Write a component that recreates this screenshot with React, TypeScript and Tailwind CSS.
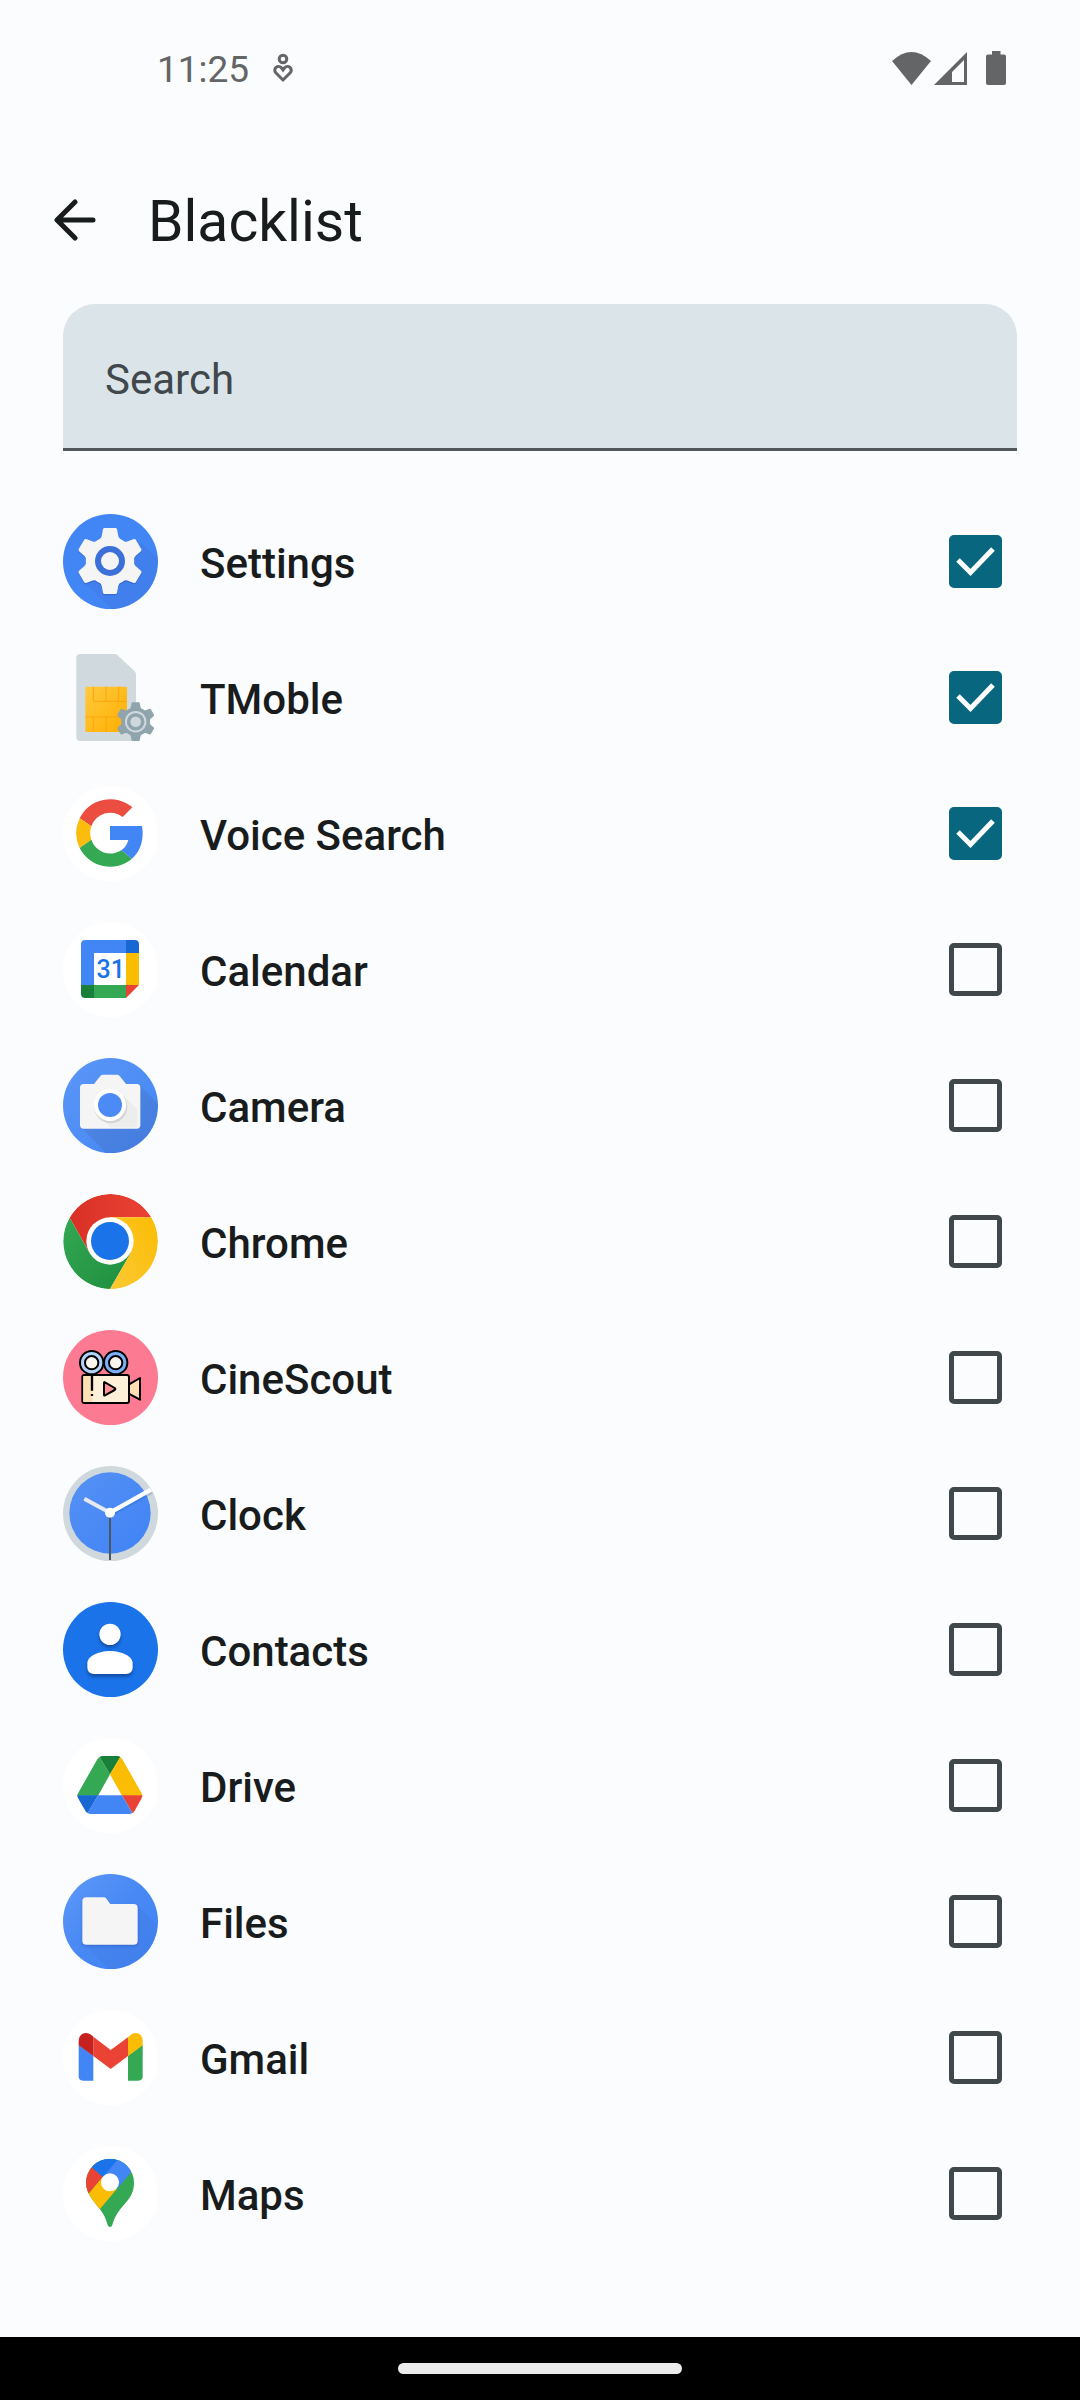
import { useState, type ReactNode } from 'react';

const TOOTH = 'M-16,-99 H16 Q20,-99 21,-95 L25,-74 Q27,-66 34,-64 L40,-60 L0,0 L-40,-60 L-34,-64 Q-27,-66 -25,-74 L-21,-95 Q-20,-99 -16,-99 Z';

function Gear({ fill }: { fill: string }) {
  return (
    <g fill={fill}>
      <circle r="72" />
      {[0, 60, 120, 180, 240, 300].map((a) => (
        <path key={a} d={TOOTH} transform={`rotate(${a})`} />
      ))}
    </g>
  );
}

function AppIcon({ viewBox, children }: { viewBox: string; children: ReactNode }) {
  return (
    <svg viewBox={viewBox} className="size-[95px] shrink-0 overflow-hidden rounded-full" aria-hidden="true">
      {children}
    </svg>
  );
}

const SettingsIcon = () => (
  <AppIcon viewBox="69 72 285 285">
    <rect x="69" y="72" width="285" height="285" fill="#4285f4" />
    <path d="M303,160 L380,225 V380 H240 L133,277 L210,213 Z" fill="#3f51b5" opacity="0.1" />
    <g transform="translate(210 217)" opacity="0.22">
      <Gear fill="#1a237e" />
    </g>
    <g transform="translate(210 213)">
      <Gear fill="#f5f5f5" />
      <circle r="45" fill="#3c6fd8" />
      <circle r="27" fill="#f5f5f5" />
    </g>
  </AppIcon>
);

const SimIcon = () => (
  <svg viewBox="69 480 285 285" className="size-[95px] shrink-0" aria-hidden="true">
    <defs>
      <linearGradient id="chip" x1="0" y1="0" x2="1" y2="1">
        <stop offset="0" stopColor="#ffca3e" />
        <stop offset="1" stopColor="#ffae00" />
      </linearGradient>
    </defs>
    <path d="M121,492 H224 Q229,492 232,495 L284,544 Q288,548 288,553 V753 H121 Q109,753 109,741 V504 Q109,492 121,492 Z" fill="#d0d9dd" />
    <rect x="136" y="590" width="125" height="136" rx="4" fill="url(#chip)" />
    <path d="M160,590 V634 H261 M198,590 V634 M236,590 V634 M136,681 H261 M160,681 V726 M198,681 V726" fill="none" stroke="#fba60c" strokeWidth="3" />
    <g transform="translate(287 695) scale(0.586)">
      <Gear fill="#90a4ae" />
      <circle r="50" fill="none" stroke="#cfd8dc" strokeWidth="10" />
      <circle r="27" fill="#cfd8dc" />
    </g>
  </svg>
);

const GoogleIcon = () => (
  <AppIcon viewBox="39 48 285 285">
    <rect x="39" y="48" width="285" height="285" fill="#fff" />
    <path d="M89,145 A102 102 0 0 1 247,112 L218,141 A60 60 0 0 0 124,169 Z" fill="#eb4d40" />
    <path d="M89,145 A102 102 0 0 0 89,234 L124,209 A60 60 0 0 1 124,169 Z" fill="#fbbc0e" />
    <path d="M89,234 A102 102 0 0 0 246,266 L214,241 A60 60 0 0 1 124,209 Z" fill="#34a853" />
    <path d="M180,168 H276 Q278,178 278,190 C278,222 266,249 246,266 L214,241 Q230,230 235,210 H180 Z" fill="#4285f4" />
  </AppIcon>
);

const CalendarIcon = () => (
  <AppIcon viewBox="39 456 285 285">
    <rect x="39" y="456" width="285" height="285" fill="#fff" />
    <path d="M106,510 H228 V549 H132 V645 H93 V523 Q93,510 106,510 Z" fill="#4285f4" />
    <path d="M228,510 H254 Q267,510 267,523 V549 H228 Z" fill="#1967d2" />
    <path d="M228,549 H267 V645 H228 Z" fill="#fbbc04" />
    <path d="M132,645 H228 V684 H132 Z" fill="#34a853" />
    <path d="M93,645 H132 V684 H106 Q93,684 93,671 Z" fill="#188038" />
    <path d="M228,645 H267 L228,684 Z" fill="#ea4335" />
    <text x="182" y="625" textAnchor="middle" fontSize="75" className="font-['Roboto',sans-serif] font-medium" fill="#1a73e8">
      31
    </text>
  </AppIcon>
);

const CameraIcon = () => (
  <AppIcon viewBox="39 54 285 285">
    <defs>
      <linearGradient id="cam" x1="0" y1="0" x2="1" y2="1">
        <stop offset="0" stopColor="#5c97f8" />
        <stop offset="1" stopColor="#4285f4" />
      </linearGradient>
    </defs>
    <rect x="39" y="54" width="285" height="285" fill="url(#cam)" />
    <path d="M268,136 L340,206 V345 H174 L94,263 Z" fill="#404a60" opacity="0.14" />
    <path d="M101,132 H132 L151,108 Q154,104 159,104 H201 Q206,104 209,108 L228,132 H260 Q271,132 271,143 V255 Q271,266 260,266 H101 Q90,266 90,255 V143 Q90,132 101,132 Z" fill="#f5f5f5" />
    <path d="M214,161 L262,208 V262 H182 L146,229 Z" fill="#000" opacity="0.03" />
    <circle cx="182" cy="200" r="50" fill="#000" opacity="0.1" />
    <circle cx="180" cy="195" r="48" fill="#fff" />
    <circle cx="180" cy="195" r="36" fill="#4c8bf5" />
  </AppIcon>
);

const ChromeIcon = () => (
  <AppIcon viewBox="39 462 285 285">
    <defs>
      <linearGradient id="chr" x1="0" y1="0" x2="1" y2="0">
        <stop offset="0" stopColor="#d93025" />
        <stop offset="1" stopColor="#ea4335" />
      </linearGradient>
      <linearGradient id="chg" x1="0" y1="0" x2="1" y2="1">
        <stop offset="0" stopColor="#34a853" />
        <stop offset="1" stopColor="#1e8e3e" />
      </linearGradient>
      <linearGradient id="chy" x1="0" y1="1" x2="1" y2="0">
        <stop offset="0" stopColor="#fcc934" />
        <stop offset="1" stopColor="#fbbc04" />
      </linearGradient>
    </defs>
    <path d="M59,533 A142 142 0 0 1 304,532 H181 V604 L119,640 Z" fill="url(#chr)" />
    <path d="M59,533 L119,640 L181,604 L242,640 L180,747 A143 143 0 0 1 59,533 Z" fill="url(#chg)" />
    <path d="M304,532 H181 V604 L242,640 L180,747 A143 143 0 0 0 304,532 Z" fill="url(#chy)" />
    <circle cx="180" cy="603" r="71" fill="#fff" />
    <circle cx="180" cy="603" r="57" fill="#1a73e8" />
  </AppIcon>
);

const CineScoutIcon = () => (
  <AppIcon viewBox="39 60 285 285">
    <rect x="39" y="60" width="285" height="285" fill="#fd7a93" />
    <g stroke="#000" strokeWidth="6" strokeLinejoin="round">
      <circle cx="125" cy="158" r="35" fill="#b0d2fb" />
      <circle cx="197" cy="158" r="35" fill="#7cb1fa" />
      <circle cx="125" cy="158" r="20" fill="#faf4ef" />
      <circle cx="197" cy="158" r="20" fill="#faf4ef" />
      <path d="M236,224 L270,204 V269 L236,251 Z" fill="#ffe0b2" />
      <rect x="97" y="195" width="140" height="84" rx="6" fill="#fff1d9" />
      <path d="M162,218 Q162,215 165,217 L194,234 Q198,237 194,240 L165,256 Q162,258 162,255 Z" fill="#ff9196" />
    </g>
    <rect x="100" y="198" width="27" height="78" fill="#ffe0b2" />
    <path d="M126,195 V242 M126,252 V258" stroke="#000" strokeWidth="7" />
  </AppIcon>
);

const ClockIcon = () => (
  <AppIcon viewBox="39 468 285 285">
    <defs>
      <linearGradient id="clk" x1="0" y1="0" x2="1" y2="1">
        <stop offset="0" stopColor="#5591f5" />
        <stop offset="1" stopColor="#4083f5" />
      </linearGradient>
    </defs>
    <rect x="39" y="468" width="285" height="285" fill="#cfd8dc" />
    <circle cx="180" cy="609" r="122" fill="url(#clk)" />
    <path d="M180,614 L305,545" stroke="#1a4fb0" strokeWidth="14" opacity="0.2" />
    <path d="M180,608 L103,566" stroke="#e6e9ef" strokeWidth="12" />
    <path d="M180,608 L303,539" stroke="#fff" strokeWidth="13" />
    <path d="M180,608 V750" stroke="#4b5660" strokeWidth="6" />
    <circle cx="180" cy="608" r="15" fill="#fff" />
  </AppIcon>
);

const PERSON = 'M112,262 V250 C112,228 146,213 180,213 S248,228 248,250 V262 Q248,282 228,282 H132 Q112,282 112,262 Z';

const ContactsIcon = () => (
  <AppIcon viewBox="39 66 285 285">
    <defs>
      <filter id="soft" x="-20%" y="-20%" width="140%" height="150%">
        <feGaussianBlur stdDeviation="4" />
      </filter>
    </defs>
    <rect x="39" y="66" width="285" height="285" fill="#1a73e8" />
    <g fill="#0b3f8c" opacity="0.7" filter="url(#soft)" transform="translate(0 8)">
      <circle cx="180" cy="163" r="32" />
      <path d={PERSON} />
    </g>
    <g fill="#fff">
      <circle cx="180" cy="163" r="32" />
      <path d={PERSON} />
    </g>
  </AppIcon>
);

const DriveIcon = () => (
  <AppIcon viewBox="39 474 285 285">
    <rect x="39" y="474" width="285" height="285" fill="#fff" />
    <path d="M82,647 Q82,643 85,638 L142,538 Q145,534 149,531 L180,583 L144,647 Z" fill="#34a853" />
    <path d="M149,531 Q153,528 158,528 H203 Q208,528 211,531 L180,583 Z" fill="#188038" />
    <path d="M211,531 Q214,533 217,538 L274,638 Q277,643 277,647 H216 L180,583 Z" fill="#fbbc04" />
    <path d="M216,646 H277 Q277,651 274,656 L254,692 Q251,697 247,699 Z" fill="#ea4335" />
    <path d="M144,646 H216 L247,699 Q243,702 238,702 H122 Q117,702 113,699 Z" fill="#4285f4" />
    <path d="M82,646 H144 L113,699 Q109,697 106,692 L85,656 Q82,651 82,646 Z" fill="#1967d2" />
  </AppIcon>
);

const FOLDER = 'M109,142 H162 Q166,142 168,145 L181,162 H251 Q263,162 263,174 V272 Q263,284 251,284 H109 Q97,284 97,272 V154 Q97,142 109,142 Z';

const FilesIcon = () => (
  <AppIcon viewBox="39 72 285 285">
    <defs>
      <linearGradient id="fil" x1="0" y1="0" x2="1" y2="1">
        <stop offset="0" stopColor="#5f99f9" />
        <stop offset="0.5" stopColor="#4788f4" />
        <stop offset="1" stopColor="#4285f4" />
      </linearGradient>
    </defs>
    <rect x="39" y="72" width="285" height="285" fill="url(#fil)" />
    <path d="M260,166 L340,240 V370 H188 L100,281 Z" fill="#3949ab" opacity="0.08" />
    <path d={FOLDER} fill="#1a3f90" opacity="0.3" filter="url(#soft)" transform="translate(0 5)" />
    <path d={FOLDER} fill="#f5f5f5" />
  </AppIcon>
);

const GmailIcon = () => (
  <AppIcon viewBox="39 480 285 285">
    <rect x="39" y="480" width="285" height="285" fill="#fff" />
    <path d="M86,585 L130,617 V692 H99 Q86,692 86,679 Z" fill="#4285f4" />
    <path d="M234,617 L278,585 V679 Q278,692 265,692 H234 Z" fill="#34a853" />
    <path d="M130,560 L182,600 L234,562 V618 L182,657 L130,618 Z" fill="#ea4335" />
    <path d="M86,586 V574 C86,550 108,542 124,555 L130,560 V618 Z" fill="#c5221f" />
    <path d="M234,618 V562 L242,555 C257,543 278,550 278,574 V586 Z" fill="#fbbc04" />
  </AppIcon>
);

const MapsIcon = () => (
  <AppIcon viewBox="39 78 285 285">
    <defs>
      <clipPath id="pin">
        <path d="M108,188 A72 72 0 0 1 252,188 C252,216 240,234 224,252 C204,275 194,290 187,315 Q185,321 180,321 Q175,321 173,315 C167,295 162,284 150,268 C134,246 108,222 108,188 Z" />
      </clipPath>
    </defs>
    <rect x="39" y="78" width="285" height="285" fill="#fff" />
    <g clipPath="url(#pin)">
      <rect x="100" y="110" width="160" height="220" fill="#34a853" />
      <path d="M126,143 L158,171 L180,187 L202,120 L180,100 L110,100 Z" fill="#1a73e8" />
      <path d="M202,120 L158,171 L180,187 L200,208 L244,156 L270,110 Z" fill="#4285f4" />
      <path d="M126,143 L158,171 L117,220 L90,220 L90,130 Z" fill="#ea4335" />
      <path d="M117,220 L158,171 L180,187 L200,208 L150,267 L90,270 Z" fill="#fbbc04" />
    </g>
    <circle cx="180" cy="187" r="27" fill="#fff" />
  </AppIcon>
);

type AppEntry = { name: string; icon: ReactNode; blocked: boolean };

const APPS: AppEntry[] = [
  { name: 'Settings', icon: <SettingsIcon />, blocked: true },
  { name: 'TMoble', icon: <SimIcon />, blocked: true },
  { name: 'Voice Search', icon: <GoogleIcon />, blocked: true },
  { name: 'Calendar', icon: <CalendarIcon />, blocked: false },
  { name: 'Camera', icon: <CameraIcon />, blocked: false },
  { name: 'Chrome', icon: <ChromeIcon />, blocked: false },
  { name: 'CineScout', icon: <CineScoutIcon />, blocked: false },
  { name: 'Clock', icon: <ClockIcon />, blocked: false },
  { name: 'Contacts', icon: <ContactsIcon />, blocked: false },
  { name: 'Drive', icon: <DriveIcon />, blocked: false },
  { name: 'Files', icon: <FilesIcon />, blocked: false },
  { name: 'Gmail', icon: <GmailIcon />, blocked: false },
  { name: 'Maps', icon: <MapsIcon />, blocked: false },
];

function StatusBar() {
  return (
    <div className="flex h-[136px] items-center justify-between pr-[74px] pl-[157px] text-[#646567]">
      <div className="flex items-center gap-6">
        <span className="pt-1 text-[37px] leading-[42px]">11:25</span>
        <svg viewBox="0 0 20 30" className="h-[30px] w-5" fill="none" stroke="currentColor" strokeWidth="3" aria-hidden="true">
          <circle cx="10" cy="6" r="3.8" />
          <path d="M10,27 L2.8,19.8 C-0.6,15.8 5,11 8.4,14.8 L10,17 L11.6,14.8 C15,11 20.6,15.8 17.2,19.8 Z" />
        </svg>
      </div>
      <div className="flex items-center" aria-hidden="true">
        <svg viewBox="0 0 39 33" className="h-[33px] w-[39px]" fill="currentColor">
          <path d="M0,9 Q19.5,-9 39,9 L19.5,33 Z" />
        </svg>
        <svg viewBox="0 0 33 33" className="ml-[3px] h-[33px] w-[33px]" fill="currentColor">
          <path fillRule="evenodd" d="M33,0 V33 H0 Z M30,8 L18,20 V30 H30 Z" />
        </svg>
        <svg viewBox="0 0 20 34" className="ml-[19px] h-[34px] w-5" fill="currentColor">
          <path d="M6,0 H14.5 V3.5 H18 Q20,3.5 20,5.5 V32 Q20,34 18,34 H2 Q0,34 0,32 V5.5 Q0,3.5 2,3.5 H6 Z" />
        </svg>
      </div>
    </div>
  );
}

function AppRow({ app, checked, onToggle }: { app: AppEntry; checked: boolean; onToggle: () => void }) {
  return (
    <li>
      <label className="flex h-[136px] cursor-pointer items-center pr-[15px]">
        {app.icon}
        <span className="ml-[42px] flex-1 pt-1 text-[42px] leading-[63px] font-medium">{app.name}</span>
        <span className="relative flex size-[53px]">
          <input
            type="checkbox"
            checked={checked}
            onChange={onToggle}
            className="peer size-[53px] appearance-none rounded-[5px] border-[5px] border-[#40484b] checked:border-[#08677f] checked:bg-[#08677f]"
          />
          <svg
            viewBox="0 0 53 53"
            className="pointer-events-none absolute inset-0 hidden size-[53px] peer-checked:block"
            fill="none"
            stroke="#fff"
            strokeWidth="5"
            aria-hidden="true"
          >
            <path d="M9,25 L21.5,37.5 L44,14" />
          </svg>
        </span>
      </label>
    </li>
  );
}

export default function App() {
  const [query, setQuery] = useState('');
  const [blocked, setBlocked] = useState<string[]>(APPS.filter((a) => a.blocked).map((a) => a.name));
  const toggle = (name: string) =>
    setBlocked((list) => (list.includes(name) ? list.filter((n) => n !== name) : [...list, name]));
  const visible = APPS.filter((a) => a.name.toLowerCase().includes(query.toLowerCase()));

  return (
    <div className="flex min-h-screen flex-col bg-[#fbfcfe] font-['Roboto',sans-serif] text-[#191c1d]">
      <StatusBar />
      <header className="flex h-[168px] items-center pl-[42px]">
        <button type="button" aria-label="Back" className="flex size-[66px] items-center justify-center">
          <svg viewBox="0 0 42 42" className="size-[42px]" fill="none" stroke="currentColor" strokeWidth="5" strokeLinecap="round" strokeLinejoin="round" aria-hidden="true">
            <path d="M39,21 H3.5 M21,3 L3,21 L21,39" />
          </svg>
        </button>
        <h1 className="ml-10 pt-1 text-[57px] leading-[74px]">Blacklist</h1>
      </header>
      <main className="flex flex-1 flex-col px-[63px]">
        <input
          type="text"
          aria-label="Search"
          placeholder="Search"
          value={query}
          onChange={(e) => setQuery(e.target.value)}
          className="h-[147px] w-full rounded-t-[32px] border-b-[3px] border-[#50585b] bg-[#dbe4e9] px-[42px] pt-1.5 text-[42px] outline-none placeholder:text-[#40484b]"
        />
        <ul className="mt-[42px]">
          {visible.map((app) => (
            <AppRow key={app.name} app={app} checked={blocked.includes(app.name)} onToggle={() => toggle(app.name)} />
          ))}
        </ul>
      </main>
      <footer className="flex h-[63px] items-center justify-center bg-black">
        <div className="h-[11px] w-[284px] rounded-full bg-[#ebebeb]" />
      </footer>
    </div>
  );
}
